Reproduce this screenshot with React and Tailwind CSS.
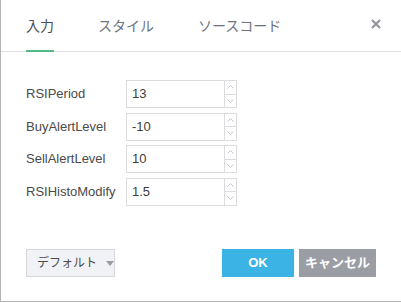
const params = [
  { name: "RSIPeriod", value: "13" },
  { name: "BuyAlertLevel", value: "-10" },
  { name: "SellAlertLevel", value: "10" },
  { name: "RSIHistoModify", value: "1.5" },
];

const font = { fontFamily: '"Liberation Sans", "Noto Sans CJK JP", sans-serif' };

const Spinner = () => (
  <div className="flex flex-col w-[12px] border-l border-[#dcdcdf]">
    <div className="flex-1 flex items-center justify-center border-b border-[#dcdcdf]">
      <svg width="7" height="4" viewBox="0 0 7 4">
        <path d="M0.5 3.5 L3.5 0.5 L6.5 3.5" fill="none" stroke="#c3c6cc" strokeWidth="1" />
      </svg>
    </div>
    <div className="flex-1 flex items-center justify-center">
      <svg width="7" height="4" viewBox="0 0 7 4">
        <path d="M0.5 0.5 L3.5 3.5 L6.5 0.5" fill="none" stroke="#c3c6cc" strokeWidth="1" />
      </svg>
    </div>
  </div>
);

export default function App() {
  return (
    <div
      className="w-[401px] h-[302px] bg-white border-l border-b border-[#b5b5b5] flex flex-col box-border"
      style={font}
    >
      <div className="h-[52px] border-b border-[#e0e1e4] flex items-stretch pl-[25px] pr-[20px]">
        <div className="flex items-stretch gap-[44px] text-[14px]">
          <div className="flex items-center border-b-2 border-[#53b987] -mb-px pt-[2px] text-[#4a4f59]">
            入力
          </div>
          <div className="flex items-center pt-[2px] text-[#6f737c]">スタイル</div>
          <div className="flex items-center pt-[2px] text-[#6f737c]">ソースコード</div>
        </div>
        <button className="ml-auto self-start mt-[19px] w-[10px] h-[10px] flex items-center justify-center">
          <svg width="10" height="10" viewBox="0 0 10 10">
            <path d="M1 1 L9 9 M9 1 L1 9" stroke="#8d9099" strokeWidth="2" />
          </svg>
        </button>
      </div>

      <div className="pt-[28px] pl-[25px] flex flex-col gap-[4.5px]">
        {params.map((p) => (
          <div key={p.name} className="flex items-center">
            <label className="w-[100px] text-[13px] text-[#4a4a4a]">{p.name}</label>
            <div className="flex w-[111px] h-[28px] border border-[#dcdcdf] bg-white">
              <div className="flex-1 flex items-center pl-[5px] text-[13px] text-[#3c3c3c]">
                {p.value}
              </div>
              <Spinner />
            </div>
          </div>
        ))}
      </div>

      <div className="mt-auto mb-[24px] pl-[25px] pr-[25px] flex items-center">
        <button className="w-[89px] h-[28px] flex items-center pl-[10px] gap-[9px] bg-[#f1f2f6] border border-[#d6d7db] text-[12px] text-[#4a4a4a]">
          デフォルト
          <svg width="8" height="5" viewBox="0 0 8 5">
            <path d="M0 0 L8 0 L4 5 Z" fill="#9a9ca3" />
          </svg>
        </button>
        <button className="ml-auto w-[72px] h-[28px] bg-[#3cb3e5] text-white text-[13px] font-bold">
          OK
        </button>
        <button className="ml-[5px] w-[77px] h-[28px] bg-[#9b9da5] text-white text-[13px] font-bold">
          キャンセル
        </button>
      </div>
    </div>
  );
}
